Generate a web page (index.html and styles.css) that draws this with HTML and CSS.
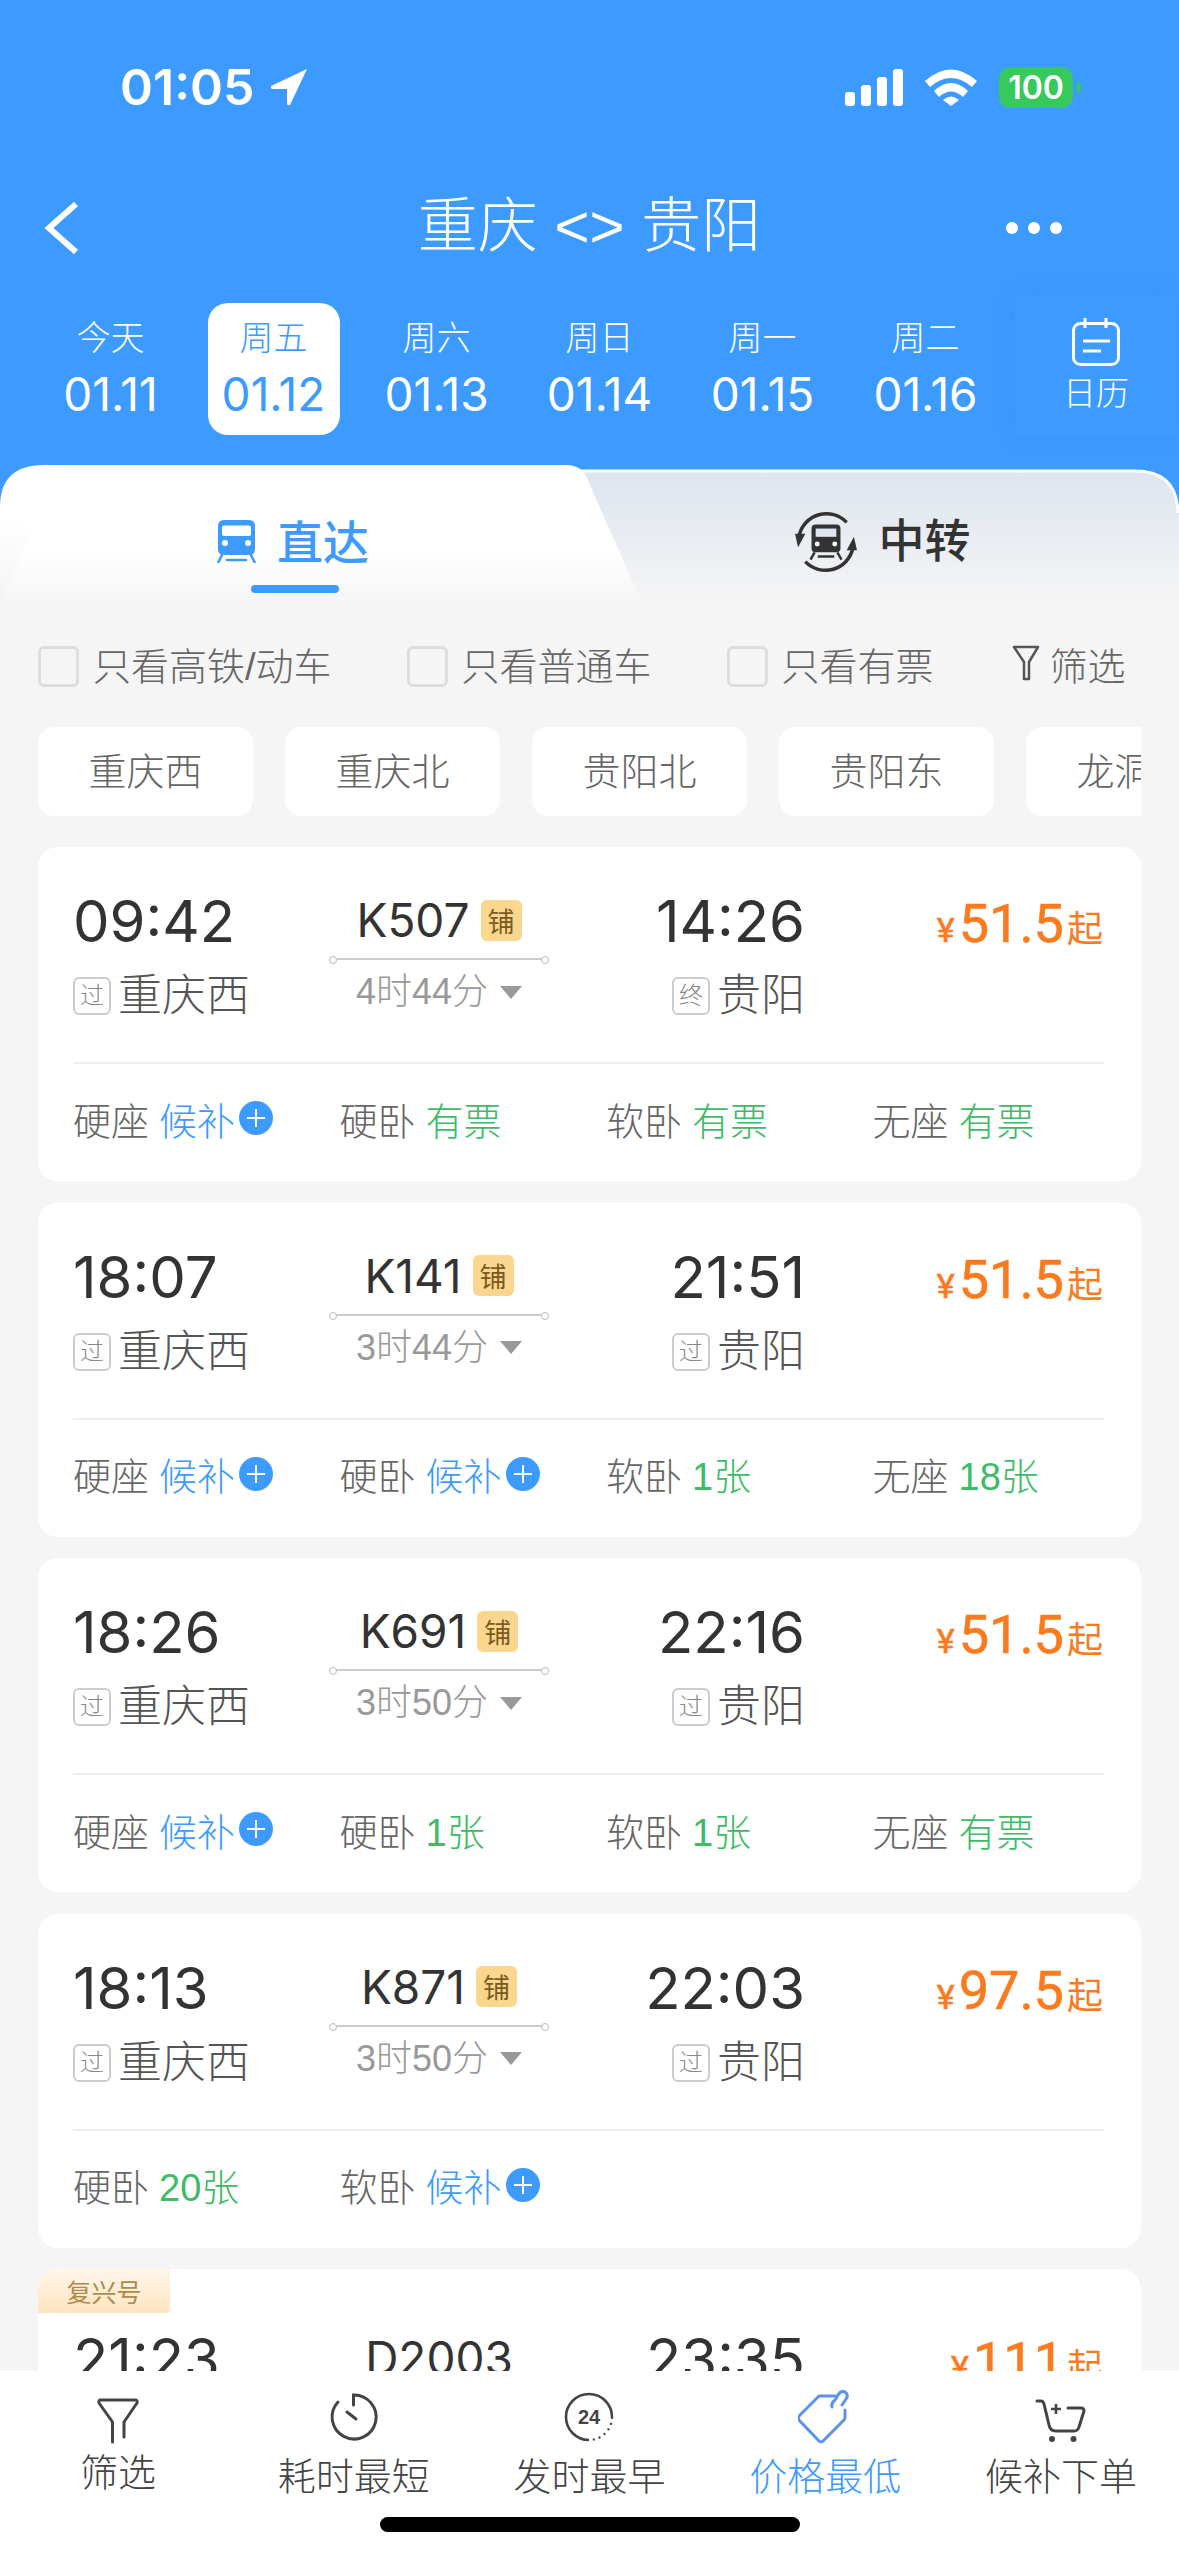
FILE: index.html
```html
<!DOCTYPE html>
<html lang="zh-CN">
<head>
    <meta charset="UTF-8">
    <meta name="viewport" content="width=device-width, initial-scale=1.0">
    <title>重庆 - 贵阳</title>
    <link rel="stylesheet" href="styles.css">
</head>
<body>
<div class="page">
    <div class="head">
        <div class="status">
            <div class="status-left">
                <span class="clock">01:05</span>
                <svg class="loc" viewBox="0 0 38 38"><path d="M37 1 L1 18 Q0 20 2 21 L17 21 L17 36 Q18 38 20 37 Z" fill="#fff"/></svg>
            </div>
            <div class="status-right">
                <svg class="signal" viewBox="0 0 58 37"><rect x="0" y="23" width="10" height="14" rx="3" fill="#fff"/><rect x="16" y="16" width="10" height="21" rx="3" fill="#fff"/><rect x="32" y="8" width="10" height="29" rx="3" fill="#fff"/><rect x="48" y="0" width="10" height="37" rx="3" fill="#fff"/></svg>
                <svg class="wifi" viewBox="0 0 52 37"><path d="M0 12 Q26 -11 52 12 L47 18 Q26 0 5 18 Z" fill="#fff"/><path d="M9 22 Q26 6 43 22 L38 28 Q26 17 14 28 Z" fill="#fff"/><path d="M18 31 Q26 24 34 31 L26 37 Z" fill="#fff"/></svg>
                <div class="battery"><span class="battery-num">100</span></div>
                <span class="battery-nub"></span>
            </div>
        </div>
        <div class="titlebar">
            <svg class="back" viewBox="0 0 36 54"><path d="M32 3 L5 27 L32 51" fill="none" stroke="#fff" stroke-width="6"/></svg>
            <div class="title">重庆 &lt;&gt; 贵阳</div>
            <div class="more"><i></i><i></i><i></i></div>
        </div>
        <div class="dates">
            <div class="date"><div class="date-box"><span class="wk">今天</span><span class="dd">01.11</span></div></div>
            <div class="date date-on"><div class="date-box"><span class="wk">周五</span><span class="dd">01.12</span></div></div>
            <div class="date"><div class="date-box"><span class="wk">周六</span><span class="dd">01.13</span></div></div>
            <div class="date"><div class="date-box"><span class="wk">周日</span><span class="dd">01.14</span></div></div>
            <div class="date"><div class="date-box"><span class="wk">周一</span><span class="dd">01.15</span></div></div>
            <div class="date"><div class="date-box"><span class="wk">周二</span><span class="dd">01.16</span></div></div>
            <div class="cal">
                <svg class="cal-icon" viewBox="0 0 48 48"><rect x="1.5" y="5.5" width="45" height="41" rx="7" fill="none" stroke="#fff" stroke-width="3"/><path d="M13 0 V10 M34 0 V10 M11 23 H38 M11 33 H29" fill="none" stroke="#fff" stroke-width="3"/></svg>
                <span class="cal-text">日历</span>
            </div>
        </div>
    </div>

    <div class="tabs">
        <svg class="tabs-bg" viewBox="0 0 1179 140" preserveAspectRatio="none">
            <defs>
                <linearGradient id="tabOff" x1="0" y1="0" x2="0" y2="1"><stop offset="0" stop-color="#dee5ef"/><stop offset="1" stop-color="#f5f5f5"/></linearGradient>
                <linearGradient id="tabOn" x1="0" y1="0" x2="0" y2="1"><stop offset="0.62" stop-color="#fff"/><stop offset="1" stop-color="#f5f5f5"/></linearGradient>
                <linearGradient id="tabFold" x1="0" y1="0" x2="0" y2="1"><stop offset="0" stop-color="#fff"/><stop offset="1" stop-color="#f3f3f4"/></linearGradient>
            </defs>
            <path d="M500 140 V7 H1135 Q1179 7 1179 50 V140 Z" fill="url(#tabOff)"/>
            <path d="M500 6 H1135 Q1177 6 1178 48" fill="none" stroke="#fff" stroke-width="3"/>
            <path d="M0 140 V42 Q0 0 44 0 H566 Q584 0 589 18 L643 140 Z" fill="url(#tabOn)"/>
            <path d="M0 56 L34 62 L3 130 V140 H0 Z" fill="url(#tabFold)"/>
        </svg>
        <div class="tab tab-on">
            <svg class="tab-icon" viewBox="0 0 39 43"><path d="M7 0 H32 Q38 0 38 6 V29 Q38 35 32 35 H7 Q1 35 1 29 V6 Q1 0 7 0 Z" fill="#3d9bff"/><rect x="5" y="5.5" width="29" height="10.5" rx="2" fill="#fff"/><circle cx="8" cy="23" r="3" fill="#fff"/><circle cx="31" cy="23" r="3" fill="#fff"/><path d="M5.5 34 L1.5 42 M33.5 34 L37.5 42 M10 40 H29" fill="none" stroke="#3d9bff" stroke-width="2.6" stroke-linecap="round"/></svg>
            <span class="tab-text">直达</span>
            <span class="tab-bar"></span>
        </div>
        <div class="tab tab-off">
            <svg class="tab-icon-2" viewBox="0 0 60 60"><path d="M50 11 A27 27 0 0 0 4 24 M10 49 A27 27 0 0 0 56 36" fill="none" stroke="#333" stroke-width="3.4"/><path d="M0 22 L10 22 L3 35 Z M60 38 L50 38 L57 25 Z" fill="#333"/><path d="M20 13 H40 Q44 13 44 17 V36 Q44 40 40 40 H20 Q16 40 16 36 V17 Q16 13 20 13 Z" fill="#333"/><rect x="20" y="17" width="20" height="8" fill="#dfe5ee"/><circle cx="21.5" cy="32" r="2.4" fill="#fff"/><circle cx="38.5" cy="32" r="2.4" fill="#fff"/><path d="M19 40 L15 47 M41 40 L45 47 M22 44 H38" fill="none" stroke="#333" stroke-width="2.4"/></svg>
            <span class="tab-text tab-text-off">中转</span>
        </div>
    </div>

    <div class="filters">
        <label class="check"><span class="box"></span>只看高铁/动车</label>
        <label class="check"><span class="box"></span>只看普通车</label>
        <label class="check"><span class="box"></span>只看有票</label>
        <div class="check check-filter">
            <svg class="filter-icon" viewBox="0 0 28 36"><path d="M2 2 H26 L17 17 V34 H12 V17 Z" fill="none" stroke="#555" stroke-width="2.5" stroke-linejoin="round"/></svg>
            筛选
        </div>
    </div>

    <div class="chips">
        <span class="chip">重庆西</span>
        <span class="chip">重庆北</span>
        <span class="chip">贵阳北</span>
        <span class="chip">贵阳东</span>
        <span class="chip">龙洞堡</span>
    </div>

    <div class="list">
        <div class="card">
            <div class="top">
                <div class="side">
                    <div class="time">09:42</div>
                    <div class="stn"><span class="mark">过</span>重庆西</div>
                </div>
                <div class="mid">
                    <div class="no">K507<span class="bed">铺</span></div>
                    <div class="line"></div>
                    <div class="dur">4时44分<i class="tri"></i></div>
                </div>
                <div class="side side-r">
                    <div class="time">14:26</div>
                    <div class="stn"><span class="mark">终</span>贵阳</div>
                </div>
                <div class="price"><span class="yen">¥</span>51.5<span class="qi">起</span></div>
            </div>
            <div class="seats">
                <div class="seat">硬座<span class="blue">候补</span><i class="plus"></i></div>
                <div class="seat">硬卧<span class="green">有票</span></div>
                <div class="seat">软卧<span class="green">有票</span></div>
                <div class="seat">无座<span class="green">有票</span></div>
            </div>
        </div>

        <div class="card">
            <div class="top">
                <div class="side">
                    <div class="time">18:07</div>
                    <div class="stn"><span class="mark">过</span>重庆西</div>
                </div>
                <div class="mid">
                    <div class="no">K141<span class="bed">铺</span></div>
                    <div class="line"></div>
                    <div class="dur">3时44分<i class="tri"></i></div>
                </div>
                <div class="side side-r">
                    <div class="time">21:51</div>
                    <div class="stn"><span class="mark">过</span>贵阳</div>
                </div>
                <div class="price"><span class="yen">¥</span>51.5<span class="qi">起</span></div>
            </div>
            <div class="seats">
                <div class="seat">硬座<span class="blue">候补</span><i class="plus"></i></div>
                <div class="seat">硬卧<span class="blue">候补</span><i class="plus"></i></div>
                <div class="seat">软卧<span class="green">1张</span></div>
                <div class="seat">无座<span class="green">18张</span></div>
            </div>
        </div>

        <div class="card">
            <div class="top">
                <div class="side">
                    <div class="time">18:26</div>
                    <div class="stn"><span class="mark">过</span>重庆西</div>
                </div>
                <div class="mid">
                    <div class="no">K691<span class="bed">铺</span></div>
                    <div class="line"></div>
                    <div class="dur">3时50分<i class="tri"></i></div>
                </div>
                <div class="side side-r">
                    <div class="time">22:16</div>
                    <div class="stn"><span class="mark">过</span>贵阳</div>
                </div>
                <div class="price"><span class="yen">¥</span>51.5<span class="qi">起</span></div>
            </div>
            <div class="seats">
                <div class="seat">硬座<span class="blue">候补</span><i class="plus"></i></div>
                <div class="seat">硬卧<span class="green">1张</span></div>
                <div class="seat">软卧<span class="green">1张</span></div>
                <div class="seat">无座<span class="green">有票</span></div>
            </div>
        </div>

        <div class="card">
            <div class="top">
                <div class="side">
                    <div class="time">18:13</div>
                    <div class="stn"><span class="mark">过</span>重庆西</div>
                </div>
                <div class="mid">
                    <div class="no">K871<span class="bed">铺</span></div>
                    <div class="line"></div>
                    <div class="dur">3时50分<i class="tri"></i></div>
                </div>
                <div class="side side-r">
                    <div class="time">22:03</div>
                    <div class="stn"><span class="mark">过</span>贵阳</div>
                </div>
                <div class="price"><span class="yen">¥</span>97.5<span class="qi">起</span></div>
            </div>
            <div class="seats">
                <div class="seat">硬卧<span class="green">20张</span></div>
                <div class="seat">软卧<span class="blue">候补</span><i class="plus"></i></div>
            </div>
        </div>

        <div class="card card-fx">
            <span class="fx">复兴号</span>
            <div class="top">
                <div class="side">
                    <div class="time">21:23</div>
                </div>
                <div class="mid">
                    <div class="no">D2003</div>
                </div>
                <div class="side side-r">
                    <div class="time">23:35</div>
                </div>
                <div class="price"><span class="yen">¥</span>111<span class="qi">起</span></div>
            </div>
        </div>
    </div>

    <div class="bottom">
        <div class="nav">
            <div class="nav-item nav-up">
                <svg class="nav-icon" viewBox="0 0 54 54"><path d="M21.5 52 V32 L8 13 Q7 10 10 10 H44 Q47 10 46 13 L33 32 V47" fill="none" stroke="#444" stroke-width="3" stroke-linecap="round" stroke-linejoin="round"/></svg>
                <span>筛选</span>
            </div>
            <div class="nav-item">
                <svg class="nav-icon" viewBox="0 0 54 54"><path d="M26.5 15 V5 A22 22 0 1 1 11 12" fill="none" stroke="#444" stroke-width="3" stroke-linecap="round"/><path d="M20 22 L29 29" fill="none" stroke="#444" stroke-width="3" stroke-linecap="round"/></svg>
                <span>耗时最短</span>
            </div>
            <div class="nav-item">
                <svg class="nav-icon" viewBox="0 0 54 54"><path d="M27 50 A23 23 0 1 1 50 27" fill="none" stroke="#444" stroke-width="2.6"/><path d="M50 27 A23 23 0 0 1 27 50" fill="none" stroke="#444" stroke-width="2.2" stroke-dasharray="2 4"/><text x="27" y="34" class="nav-24">24</text></svg>
                <span>发时最早</span>
            </div>
            <div class="nav-item nav-on">
                <svg class="nav-icon" viewBox="0 0 54 54"><path d="M38 6 H21 L1 26 Q0 28 1 30 L21 51 Q23 53 25 51 L46 30 Q47 29 47 27 V20" fill="none" stroke="#5a92ec" stroke-width="3" stroke-linecap="round" stroke-linejoin="round"/><path d="M34 17 Q33 13 37 10 L40 5 Q43 0 47 2 Q51 5 48 9 L44 15" fill="none" stroke="#5a92ec" stroke-width="3" stroke-linecap="round"/></svg>
                <span>价格最低</span>
            </div>
            <div class="nav-item">
                <svg class="nav-icon" viewBox="0 0 54 54"><path d="M3 11 H7 Q9 11 10 14 L15 35 Q16 41 22 41 H40 Q44 41 45 37 L50 21 Q50 18 47 18 H34" fill="none" stroke="#444" stroke-width="3" stroke-linecap="round"/><path d="M22 14 V24 M17 19 H27" fill="none" stroke="#444" stroke-width="2.6"/><circle cx="18" cy="49" r="3" fill="#444"/><circle cx="39.5" cy="49" r="3" fill="#444"/></svg>
                <span>候补下单</span>
            </div>
        </div>
        <div class="home"></div>
    </div>
</div>
</body>
</html>
```

FILE: styles.css
```css
* {
    margin: 0;
    padding: 0;
    box-sizing: border-box;
}

body {
    font-family: "Liberation Sans", "Noto Sans CJK SC", sans-serif;
    background: #f5f5f5;
}

i {
    font-style: normal;
}

.page {
    width: 1179px;
    height: 2556px;
    display: flex;
    flex-direction: column;
    overflow: hidden;
    background: #f5f5f5;
}

/* blue header */
.head {
    background: #3d9bff;
    color: #fff;
    height: 465px;
    flex-shrink: 0;
}

.status {
    height: 174px;
    display: flex;
    align-items: center;
    justify-content: space-between;
    padding: 0 98px 0 120px;
}

.status-left {
    display: flex;
    align-items: center;
    gap: 15px;
}

.clock {
    font-family: Inter, sans-serif;
    font-weight: 600;
    font-size: 50px;
}

.loc {
    width: 38px;
    height: 38px;
}

.status-right {
    display: flex;
    align-items: center;
}

.signal {
    width: 58px;
    height: 37px;
}

.wifi {
    width: 52px;
    height: 37px;
    margin-left: 22px;
}

.battery {
    width: 74px;
    height: 41px;
    margin-left: 22px;
    background: #36c95c;
    border-radius: 12px;
    display: flex;
    align-items: center;
    justify-content: center;
}

.battery-num {
    font-family: Inter, sans-serif;
    font-weight: 600;
    font-size: 32px;
}

.battery-nub {
    width: 4px;
    height: 11px;
    margin-left: 4px;
    background: #36c95c;
    border-radius: 0 4px 4px 0;
}

.titlebar {
    height: 108px;
    display: grid;
    grid-template-columns: 1fr auto 1fr;
    align-items: center;
    padding: 0 44px;
}

.back {
    width: 36px;
    height: 54px;
}

.title {
    font-size: 60px;
    line-height: 100px;
    padding-bottom: 2px;
    font-weight: 300;
}

.more {
    display: flex;
    gap: 10px;
    justify-content: flex-end;
    margin-right: 73px;
}

.more i {
    width: 12px;
    height: 12px;
    border-radius: 50%;
    background: #fff;
}

.dates {
    display: flex;
    margin-top: 21px;
    padding-left: 29px;
    height: 132px;
    position: relative;
}

.date {
    width: 163px;
    display: flex;
    justify-content: center;
}

.date-box {
    width: 132px;
    height: 132px;
    border-radius: 20px;
    display: flex;
    flex-direction: column;
    align-items: center;
    padding-top: 13px;
}

.date-on .date-box {
    background: #fff;
    color: #3d9bff;
}

.wk {
    font-size: 34px;
    line-height: 44px;
    font-weight: 300;
}

.dd {
    font-family: Inter, sans-serif;
    font-size: 46px;
    line-height: 50px;
    margin-top: 9px;
}

.cal {
    margin-left: 8px;
    margin-top: -8px;
    width: 162px;
    height: 140px;
    padding-top: 23px;
    display: flex;
    flex-direction: column;
    align-items: center;
    box-shadow: 0 0 20px rgba(40, 110, 200, 0.16);
}

.cal-icon {
    width: 48px;
    height: 48px;
}

.cal-text {
    font-size: 33px;
    line-height: 44px;
    margin-top: 6px;
    font-weight: 300;
}

/* tabs */
.tabs {
    height: 140px;
    flex-shrink: 0;
    position: relative;
    display: flex;
    background: linear-gradient(#3d9bff 60px, #f5f5f5 60px);
}

.tabs-bg {
    position: absolute;
    left: 0;
    top: 0;
    width: 1179px;
    height: 140px;
}

.tab {
    position: relative;
    display: flex;
    align-items: flex-start;
    justify-content: center;
}

.tab-on {
    width: 589px;
    padding: 55px 3px 0 0;
    gap: 21px;
}

.tab-off {
    width: 590px;
    padding: 46px 3px 0 0;
    gap: 22px;
}

.tab-icon {
    width: 39px;
    height: 43px;
}

.tab-icon-2 {
    width: 62px;
    height: 62px;
}

.tab-text {
    font-size: 46px;
    line-height: 46px;
    font-weight: 500;
    color: #3d9bff;
}

.tab-text-off {
    color: #333;
    margin-top: 7px;
}

.tab-bar {
    position: absolute;
    left: 251px;
    top: 120px;
    width: 88px;
    height: 8px;
    border-radius: 4px;
    background: #3d9bff;
}

/* filters */
.filters {
    display: flex;
    align-items: center;
    gap: 75px;
    padding: 36px 0 0 38px;
    height: 80px;
    flex-shrink: 0;
}

.check {
    display: flex;
    align-items: center;
    font-size: 38px;
    color: #666;
    font-weight: 300;
}

.box {
    width: 41px;
    height: 41px;
    margin-top: 6px;
    border: 3px solid #ddd;
    border-radius: 6px;
    margin-right: 14px;
}

.check-filter {
    margin-left: 3px;
}

.filter-icon {
    width: 28px;
    height: 36px;
    margin-right: 10px;
}

.chips {
    display: flex;
    gap: 32px;
    margin: 42px 38px 0;
    overflow: hidden;
    flex-shrink: 0;
}

.chip {
    width: 215px;
    height: 89px;
    flex-shrink: 0;
    background: #fff;
    border-radius: 16px;
    padding-bottom: 6px;
    font-size: 38px;
    font-weight: 300;
    color: #666;
    display: flex;
    align-items: center;
    justify-content: center;
}

/* train cards */
.list {
    flex: 1;
    min-height: 0;
    overflow: hidden;
    padding: 31px 38px 0;
}

.card {
    background: #fff;
    border-radius: 20px;
    height: 334px;
    margin-bottom: 21.5px;
    padding: 38px 37px 0 35px;
    position: relative;
}

.card-fx {
    padding-top: 54px;
}

.fx {
    position: absolute;
    left: 0;
    top: 0;
    width: 132px;
    height: 44px;
    border-radius: 20px 0 4px 0;
    background: linear-gradient(#fff7ea, #fde4c0);
    color: #b08a4a;
    font-size: 25px;
    display: flex;
    align-items: center;
    justify-content: center;
}

.top {
    display: grid;
    grid-template-columns: 257px 218px 257px 299px;
    height: 132px;
    border-bottom: 2px solid #eeeeee;
    box-sizing: content-box;
    padding-bottom: 45px;
}

.card-fx .top {
    border-bottom: none;
}

.time {
    font-family: Inter, sans-serif;
    font-size: 58px;
    line-height: 72px;
    color: #333;
}

.stn {
    display: flex;
    align-items: center;
    margin-top: 17px;
    font-size: 44px;
    line-height: 44px;
    font-weight: 300;
    color: #555;
}

.side-r {
    display: flex;
    flex-direction: column;
    align-items: flex-end;
}

.mark {
    width: 38px;
    height: 38px;
    border: 2px solid #ccc;
    border-radius: 6px;
    font-size: 24px;
    color: #888;
    display: flex;
    align-items: center;
    justify-content: center;
    margin-right: 7px;
}

.mid {
    display: flex;
    flex-direction: column;
    align-items: center;
}

.no {
    display: flex;
    align-items: center;
    height: 70px;
    font-family: Inter, "Noto Sans CJK SC", sans-serif;
    font-size: 46px;
    color: #333;
}

.bed {
    width: 41px;
    height: 41px;
    margin-left: 11px;
    border-radius: 6px;
    background: #fbd68e;
    color: #7a5a20;
    font-size: 27px;
    display: flex;
    align-items: center;
    justify-content: center;
}

.line {
    width: 218px;
    height: 2px;
    background: #ccc;
    margin-top: 3px;
    position: relative;
}

.line::before,
.line::after {
    content: '';
    position: absolute;
    top: -2px;
    width: 6px;
    height: 6px;
    border: 1px solid #bbb;
    border-radius: 50%;
    background: #fff;
}

.line::before {
    left: -1px;
}

.line::after {
    right: -1px;
}

.dur {
    display: flex;
    align-items: center;
    margin-top: 10px;
    font-size: 36px;
    line-height: 44px;
    color: #999;
    font-weight: 300;
}

.tri {
    width: 0;
    height: 0;
    margin-left: 12px;
    border-left: 11px solid transparent;
    border-right: 11px solid transparent;
    border-top: 13px solid #999;
}

.price {
    text-align: right;
    padding: 3px 1px 0 0;
    font-family: Roboto, "Noto Sans CJK SC", sans-serif;
    font-size: 54px;
    line-height: 72px;
    color: #fa7a1e;
    -webkit-text-stroke: 0.6px #fa7a1e;
}

.yen {
    font-size: 34px;
    margin-right: 4px;
}

.qi {
    font-size: 36px;
    margin-left: 3px;
    -webkit-text-stroke: 0;
}

.seats {
    display: grid;
    grid-template-columns: repeat(4, 266.5px);
    height: 117px;
    padding-bottom: 9px;
    align-items: center;
}

.seat {
    display: flex;
    align-items: center;
    font-size: 38px;
    color: #666;
    font-weight: 300;
}

.blue,
.green {
    margin-left: 10px;
}

.blue {
    color: #3d9bff;
}

.green {
    color: #3dbb66;
}

.plus {
    width: 34px;
    height: 34px;
    margin-left: 4px;
    border-radius: 50%;
    background: #3d9bff;
    position: relative;
}

.plus::before,
.plus::after {
    content: '';
    position: absolute;
    background: #fff;
}

.plus::before {
    left: 8px;
    top: 16px;
    width: 18px;
    height: 2px;
}

.plus::after {
    left: 16px;
    top: 8px;
    width: 2px;
    height: 18px;
}

/* bottom bar */
.bottom {
    height: 185px;
    flex-shrink: 0;
    background: #fff;
    position: relative;
}

.nav {
    display: grid;
    grid-template-columns: repeat(5, 1fr);
    padding-top: 19px;
}

.nav-item {
    display: flex;
    flex-direction: column;
    align-items: center;
    font-size: 38px;
    line-height: 44px;
    color: #444;
    font-weight: 300;
}

.nav-item span {
    margin-top: 11px;
}

.nav-up span {
    margin-top: 7px;
}

.nav-on {
    color: #3d9bff;
}

.nav-icon {
    width: 54px;
    height: 54px;
}

.nav-24 {
    font-size: 20px;
    font-weight: 700;
    fill: #444;
    text-anchor: middle;
}

.home {
    position: absolute;
    left: 380px;
    top: 146px;
    width: 420px;
    height: 15px;
    border-radius: 8px;
    background: #000;
}
```
